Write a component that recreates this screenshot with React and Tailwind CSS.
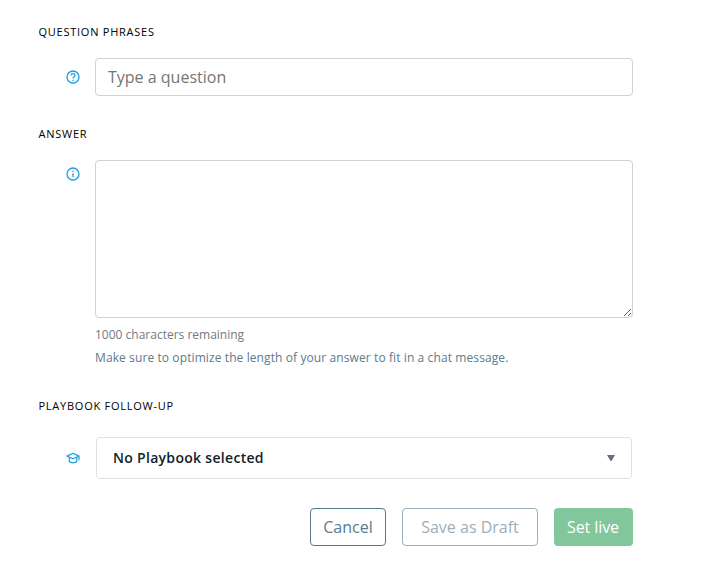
import React, { useState } from "react";

const HelpIcon = () => (
  <svg width="14" height="14" viewBox="0 0 14 14" fill="none" stroke="#1c9fda" strokeWidth="1.3">
    <circle cx="7" cy="7" r="6" />
    <path d="M4.900 5.300C5.200 3 9 3.100 9 5.300 9 6.900 7.200 6.800 7.100 8.500" />
    <path d="M7 9.700v1.200" />
  </svg>
);

const InfoIcon = () => (
  <svg width="14" height="14" viewBox="0 0 14 14" fill="none" stroke="#1c9fda" strokeWidth="1.3">
    <circle cx="7" cy="7" r="6" />
    <path d="M7 6.200v4.100M7 3.700v1.400" />
  </svg>
);

const PlaybookIcon = () => (
  <svg width="14" height="12" viewBox="0 0 14 12" fill="none" stroke="#1c9fda" strokeWidth="1.2" strokeLinejoin="round">
    <path d="M1 4.100 7 1.200l6 2.900-6 2.700-6-2.700Z" />
    <path d="M3.300 5.300v4.200c1.800 1.700 5.600 1.700 7.400 0V5.300M12.900 4.200v4" />
  </svg>
);

const SectionTitle = ({ children }) => (
  <h2 className="-ml-[0.5px] text-[11px] leading-4 tracking-[0.75px] text-black">{children}</h2>
);

const App = () => {
  const [question, setQuestion] = useState("");
  const [answer, setAnswer] = useState("");

  return (
    <form
      onSubmit={(e) => e.preventDefault()}
      className="h-[576px] w-[708px] bg-white pt-6 pl-[39px] font-['Open_Sans',sans-serif]"
    >
      <SectionTitle>QUESTION PHRASES</SectionTitle>
      <div className="mt-[18px] flex items-center">
        <div className="w-[56px] pl-[27px]">
          <HelpIcon />
        </div>
        <input
          value={question}
          onChange={(e) => setQuestion(e.target.value)}
          placeholder="Type a question"
          className="h-[38px] w-[538px] rounded-[4px] border border-[#ced0da] px-3 text-base text-[#4b5560] outline-none placeholder:text-[#757575]"
        />
      </div>

      <div className="mt-[30px]">
        <SectionTitle>ANSWER</SectionTitle>
      </div>
      <div className="mt-[18px] flex">
        <div className="w-[56px] pt-[7px] pl-[27px]">
          <InfoIcon />
        </div>
        <div>
          <textarea
            value={answer}
            maxLength={1000}
            onChange={(e) => setAnswer(e.target.value)}
            className="block h-[158px] w-[538px] rounded-[4px] border border-[#ced0da] px-3 py-2 text-base outline-none"
          />
          <p className="mt-[7px] text-[12px] leading-5 text-[#74797e]">
            {1000 - answer.length} characters remaining
          </p>
          <p className="mt-[3px] text-[12px] leading-5 tracking-[0.1px] text-[#597c8e]">
            Make sure to optimize the length of your answer to fit in a chat message.
          </p>
        </div>
      </div>

      <div className="mt-[30px]">
        <SectionTitle>PLAYBOOK FOLLOW-UP</SectionTitle>
      </div>
      <div className="mt-[23px] flex items-center">
        <div className="w-[57px] pl-[27px]">
          <PlaybookIcon />
        </div>
        <button
          type="button"
          className="flex h-[42px] w-[536px] items-center justify-between rounded-[4px] border border-[#e0e1e2] pr-4 pl-4 text-[14px] font-semibold tracking-[0.3px] text-[#10222c]"
        >
          <span className="pb-0.5">No Playbook selected</span>
          <svg width="8" height="6" viewBox="0 0 8 6" fill="#637381">
            <path d="M0 0h8L4.500 6h-1Z" />
          </svg>
        </button>
      </div>

      <div className="mt-[29px] flex w-[594px] justify-end gap-4 text-base">
        <button type="button" className="h-[38px] w-[76px] rounded-[4px] border border-[#557b8c] text-[#597c8e]">
          Cancel
        </button>
        <button type="button" className="h-[38px] w-[136px] rounded-[4px] border border-[#99afba] text-[#9bb0bb]">
          Save as Draft
        </button>
        <button type="submit" className="h-[38px] w-[79px] rounded-[4px] bg-[#82c79c] pr-px font-medium tracking-[-0.1px] text-white">
          Set live
        </button>
      </div>
    </form>
  );
};

export default App;
